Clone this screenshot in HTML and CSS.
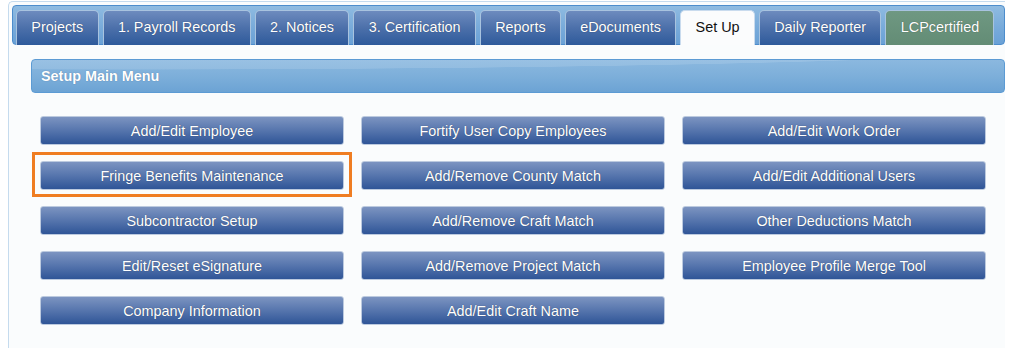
FILE: index.html
```html
<!DOCTYPE html>
<html lang="en">
<head>
  <meta charset="UTF-8">
  <title>Setup Main Menu</title>
  <link rel="stylesheet" href="styles.css">
</head>
<body>
  <div class="panel">
    <div class="tabbar">
      <a class="tab">Projects</a>
      <a class="tab">1. Payroll Records</a>
      <a class="tab">2. Notices</a>
      <a class="tab">3. Certification</a>
      <a class="tab">Reports</a>
      <a class="tab">eDocuments</a>
      <a class="tab active">Set Up</a>
      <a class="tab">Daily Reporter</a>
      <a class="tab lcp">LCPcertified</a>
    </div>
    <div class="section-header">Setup Main Menu</div>
    <div class="menu-grid">
      <button>Add/Edit Employee</button>
      <button>Fortify User Copy Employees</button>
      <button>Add/Edit Work Order</button>
      <button class="highlight">Fringe Benefits Maintenance</button>
      <button>Add/Remove County Match</button>
      <button>Add/Edit Additional Users</button>
      <button>Subcontractor Setup</button>
      <button>Add/Remove Craft Match</button>
      <button>Other Deductions Match</button>
      <button>Edit/Reset eSignature</button>
      <button>Add/Remove Project Match</button>
      <button>Employee Profile Merge Tool</button>
      <button>Company Information</button>
      <button>Add/Edit Craft Name</button>
    </div>
  </div>
</body>
</html>
```

FILE: styles.css
```css
* { box-sizing: border-box; margin: 0; padding: 0; }
body {
  background: #fff;
  font-family: "Liberation Sans", Arial, sans-serif;
  font-size: 14.4px;
  width: 1020px;
  height: 348px;
  overflow: hidden;
}
.panel {
  margin: 1px 0 0 8px;
  width: 997px;
  height: 347px;
  border: 1px solid #c5dbee;
  border-right: none;
  border-bottom: none;
  border-radius: 5px 0 0 0;
  background: #fafcfd;
  padding: 3px 0 0 3px;
}
.tabbar {
  height: 40px;
  border: 1px solid #4d8dcc;
  border-radius: 4px;
  background: linear-gradient(#8fbbe1, #77aada 60%, #6aa1d6);
  padding: 3px 0 0 3px;
  display: flex;
  align-items: flex-end;
  gap: 4px;
}
.tab {
  height: 35px;
  margin-bottom: -1px;
  padding: 0 14.3px;
  border: 1px solid #a8c3df;
  border-bottom: none;
  border-radius: 5px 5px 0 0;
  background: linear-gradient(#6d8bbe, #4c70aa 50%, #2e5a9b);
  color: #fff;
  line-height: 32px;
  white-space: nowrap;
  text-shadow: 0 0 1px rgba(0, 0, 0, 0.45);
}
.tab.active {
  background: #fbfcfd;
  color: #111;
  text-shadow: none;
  border-color: #c9dbee;
}
.tab.lcp {
  background: linear-gradient(#6f9882, #638c75);
}
.section-header {
  margin: 14px 0 0 19px;
  height: 34px;
  border: 1px solid #5c9bd4;
  border-radius: 4px;
  padding-left: 9px;
  line-height: 32px;
  font-weight: bold;
  color: #fff;
  text-shadow: 0 0 1px rgba(40, 70, 110, 0.6);
  background:
    radial-gradient(ellipse 140% 120% at 10% -55%, rgba(255, 255, 255, 0.12) 70%, rgba(255, 255, 255, 0) 71%),
    linear-gradient(#8bb8df, #7dafda 50%, #6ca3d4);
}
.menu-grid {
  margin: 23px 0 0 28px;
  display: grid;
  grid-template-columns: repeat(3, 304px);
  grid-auto-rows: 29px;
  column-gap: 17px;
  row-gap: 16px;
}
.menu-grid button {
  position: relative;
  border: 1px solid #bccadf;
  border-radius: 3px;
  background: linear-gradient(#7c94c1, #5675ad 50%, #2f5597);
  color: #fff;
  font-family: inherit;
  font-size: 14.4px;
  text-shadow: 0 0 1px rgba(0, 0, 0, 0.45);
  cursor: pointer;
}
.menu-grid button.highlight::after {
  content: "";
  position: absolute;
  top: -10px;
  left: -9px;
  right: -9px;
  bottom: -8px;
  border: 3px solid #ef7d22;
  pointer-events: none;
}
```
